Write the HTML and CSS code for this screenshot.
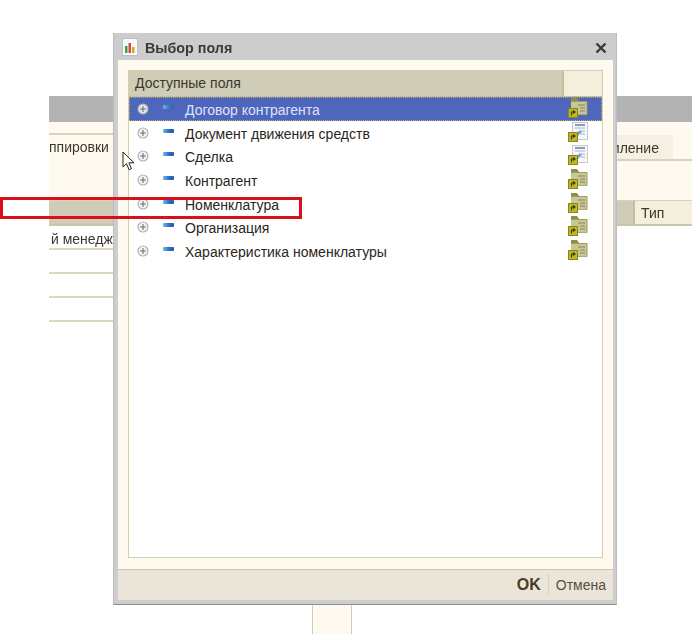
FILE: index.html
```html
<!DOCTYPE html>
<html lang="ru">
<head>
<meta charset="utf-8">
<title>Выбор поля</title>
<link rel="stylesheet" href="styles.css">
</head>
<body>
<svg class="defs" width="0" height="0" aria-hidden="true">
  <defs>
    <symbol id="expand" viewBox="0 0 12 12">
      <circle cx="6" cy="6" r="5" fill="#f4f4f4" stroke="#b4b4b4" stroke-width="1.2"/>
      <path d="M3 6h6M6 3v6" stroke="#707070" stroke-width="1.1"/>
    </symbol>
    <symbol id="badge" viewBox="0 0 10 10">
      <rect x="0.5" y="0.5" width="9" height="9" fill="#bdb922" stroke="#88831c"/>
      <path d="M3.500 7.500V4h3M5 2.500L7 4 5 5.500" fill="none" stroke="#3b3a10" stroke-width="1.100"/>
    </symbol>
    <symbol id="folder" viewBox="0 0 20 20">
      <path d="M3 0h6l2 3h8v14H3z" fill="#8f8d4a"/>
      <rect x="3" y="3.500" width="16" height="13" fill="#c9c795"/>
      <path d="M3 3.500h16v13" fill="none" stroke="#9c9a5e" stroke-width="1"/>
      <path d="M10 7h7M12 10h5M12 13h5" stroke="#87865f" stroke-width="1"/>
      <use href="#badge" x="0" y="10" width="10" height="10"/>
    </symbol>
    <symbol id="doc" viewBox="0 0 20 20">
      <rect x="4.500" y="0.500" width="15" height="17" fill="#f6f7fb" stroke="#c9c9c9"/>
      <path d="M7 3h10" stroke="#5d7fae" stroke-width="1.500"/>
      <path d="M7 6h10M13 9h4M13 12h4" stroke="#a8b4c6" stroke-width="1"/>
      <path d="M8 12l4-4 2 2-4 4z" fill="#6fa6dc"/>
      <use href="#badge" x="0" y="10" width="10" height="10"/>
    </symbol>
  </defs>
</svg>

<main class="backdrop">
  <div class="bg-titlebar"></div>
  <div class="bg-panel">
    <div class="bg-tabs">
      <span class="bg-tab-left">ппировки</span>
      <div class="bg-tabs-rest">
        <span class="bg-tab-right">мление</span>
      </div>
    </div>
    <div class="bg-columns">
      <span class="bg-col-main"></span>
      <span class="bg-col-type">Тип</span>
    </div>
  </div>
  <div class="bg-rows">
    <div class="bg-row bg-row-text"><span>й менедж</span></div>
    <div class="bg-row"></div>
    <div class="bg-row"></div>
    <div class="bg-row"></div>
  </div>
  <div class="bg-stub"></div>
</main>

<section class="dialog">
  <header class="dialog-title">
    <svg class="title-icon" viewBox="0 0 16 18" width="16" height="18">
      <rect x="0.500" y="0.500" width="15" height="17" fill="#fbfbf6" stroke="#b9c0c9"/>
      <rect x="3" y="8" width="2.500" height="7" fill="#3f9c46"/>
      <rect x="6.500" y="5" width="2.500" height="10" fill="#c9503a"/>
      <rect x="10" y="9" width="2.500" height="6" fill="#d4a52a"/>
    </svg>
    <h1>Выбор поля</h1>
    <svg class="close-icon" viewBox="0 0 12 12" width="12" height="12">
      <path d="M1.500 1.500l9 9M10.500 1.500l-9 9" stroke="#3a3a3a" stroke-width="2.400"/>
    </svg>
  </header>
  <div class="dialog-body">
    <div class="tree">
      <div class="tree-head">
        <span class="tree-head-name">Доступные поля</span>
        <span class="tree-head-side"></span>
      </div>
      <ul class="tree-list">
        <li class="tree-row selected">
          <svg class="ico-expand"><use href="#expand"/></svg><i class="dash"></i><span class="label">Договор контрагента</span>
          <svg class="ico-type"><use href="#folder"/></svg>
        </li>
        <li class="tree-row">
          <svg class="ico-expand"><use href="#expand"/></svg><i class="dash"></i><span class="label">Документ движения средств</span>
          <svg class="ico-type"><use href="#doc"/></svg>
        </li>
        <li class="tree-row">
          <svg class="ico-expand"><use href="#expand"/></svg><i class="dash"></i><span class="label">Сделка</span>
          <svg class="ico-type"><use href="#doc"/></svg>
        </li>
        <li class="tree-row">
          <svg class="ico-expand"><use href="#expand"/></svg><i class="dash"></i><span class="label">Контрагент</span>
          <svg class="ico-type"><use href="#folder"/></svg>
        </li>
        <li class="tree-row">
          <svg class="ico-expand"><use href="#expand"/></svg><i class="dash"></i><span class="label">Номенклатура</span>
          <svg class="ico-type"><use href="#folder"/></svg>
        </li>
        <li class="tree-row">
          <svg class="ico-expand"><use href="#expand"/></svg><i class="dash"></i><span class="label">Организация</span>
          <svg class="ico-type"><use href="#folder"/></svg>
        </li>
        <li class="tree-row">
          <svg class="ico-expand"><use href="#expand"/></svg><i class="dash"></i><span class="label">Характеристика номенклатуры</span>
          <svg class="ico-type"><use href="#folder"/></svg>
        </li>
      </ul>
    </div>
  </div>
  <footer class="dialog-foot">
    <span class="btn-ok">OK</span>
    <span class="btn-cancel">Отмена</span>
  </footer>
</section>

<div class="annotation"></div>

<svg class="cursor" viewBox="0 0 14 20" width="14" height="20">
  <path d="M1 1v15l3.500-3.300 2.600 6 2.400-1-2.600-5.900H12z" fill="#fff" stroke="#222" stroke-width="1"/>
</svg>
</body>
</html>
```

FILE: styles.css
```css
* { box-sizing: border-box; }
html, body { margin: 0; padding: 0; }
body {
  width: 692px;
  height: 634px;
  overflow: hidden;
  background: #fff;
  position: relative;
  font-family: "Liberation Sans", Arial, sans-serif;
  font-size: 14px;
  color: #2e2a20;
  filter: blur(0.35px);
}
.defs { position: absolute; }

/* background window */
.backdrop { padding: 96px 0 0 49px; display: flex; flex-direction: column; }
.bg-titlebar { height: 26px; background: #b3b3b3; }
.bg-panel { height: 104px; background: #fffaef; display: flex; flex-direction: column; }
.bg-tabs {
  height: 39px;
  padding-top: 11px;
  display: flex;
  align-items: stretch;
}
.bg-tab-left {
  width: 120px;
  flex: none;
  border-top: 2px solid #d8d3b8;
  padding-top: 4px;
  line-height: 16px;
  color: #3b372c;
}
.bg-tabs-rest {
  flex: 1;
  display: flex;
  justify-content: flex-end;
  border-bottom: 2px solid #d8d3b8;
  padding-top: 2px;
}
.bg-tab-right {
  width: 124px;
  margin-right: 19px;
  background: #f5f0e4;
  padding: 5px 0 0 61px;
  line-height: 16px;
  color: #3b372c;
}
.bg-columns {
  height: 26px;
  margin-top: 39px;
  display: flex;
  border-top: 1px solid #d8d3b8;
  border-bottom: 2px solid #c9c5a6;
}
.bg-col-main { width: 586px; background: #cfccb8; border-right: 2px solid #c2be9f; }
.bg-col-type { flex: 1; background: #f3efdc; padding: 4px 0 0 6px; line-height: 17px; color: #3b372c; }
.bg-rows { display: flex; flex-direction: column; height: 96px; width: 70px; white-space: nowrap; }
.bg-row { height: 24px; flex: none; border-bottom: 2px solid #dcd7bd; padding-top: 5px; line-height: 16px; color: #3b372c; }
.bg-row-text { padding-left: 2px; }
.bg-stub {
  width: 40px;
  height: 30px;
  margin: 283px 0 0 263px;
  background: #fffaef;
  border-left: 1px solid #d2ceb4;
  border-right: 1px solid #d2ceb4;
}

/* red annotation */
.annotation {
  position: absolute;
  left: 0; top: 197px;
  width: 302px; height: 22px;
  border: 3px solid #d9101a;
}

/* dialog */
.dialog {
  position: absolute;
  left: 113px; top: 33px;
  width: 504px; height: 572px;
  background: #cdcdcd;
  border-bottom: 1px solid #8c8c8c;
  border-left: 1px solid #bdbdbd;
  border-right: 1px solid #bdbdbd;
  padding: 0 3px 4px 4px;
  display: flex;
  flex-direction: column;
}
.dialog-title {
  height: 27px;
  display: flex;
  align-items: center;
  margin: 0 -3px 0 -4px;
  padding: 0 9px 0 8px;
  flex: none;
}
.title-icon { flex: none; }
.dialog-title h1 { margin: 2px 0 0 7px; font-size: 14.300px; font-weight: 700; color: #3a3a36; flex: 1; }
.close-icon { flex: none; margin-top: 2px; }
.dialog-body { flex: 1; background: #fffaef; padding: 10px 10px 11px 10px; display: flex; border-bottom: 1px solid #cbc8a4; }
.tree { flex: 1; background: #fff; border: 1px solid #d2cfae; display: flex; flex-direction: column; }
.tree-head { height: 26px; display: flex; flex: none; background: #cfccb8; border-bottom: 1px solid #c4c09f; }
.tree-head-name { flex: 1; padding: 4px 0 0 6px; line-height: 16px; color: #3a372a; }
.tree-head-side { width: 40px; background: #f3efdc; border-left: 2px solid #c4c09f; }
.tree-list { list-style: none; margin: 0; padding: 0; }
.tree-row {
  height: 23.700px;
  display: flex;
  align-items: center;
  padding-left: 8px;
  color: #2a2620;
}
.tree-row.selected { background: #4f66bd; color: #dfe3f6; outline: 1px dotted #b5ab6a; outline-offset: -1px; }
.ico-expand { width: 12px; height: 12px; flex: none; }
.selected .ico-expand { opacity: 0.9; }
.dash {
  width: 11px; height: 4px; flex: none;
  margin-left: 14px;
  background: linear-gradient(90deg, #7fb2e2, #2c78c8 50%, #1a58a6);
  border-radius: 1px;
  position: relative; top: -2px;
}
.selected .dash { background: linear-gradient(90deg, #7fb2e2, #3b7cc8 50%, #2f5fa8); }
.label { margin: 2px 0 0 11px; flex: 1; line-height: 16px; }
.ico-type { width: 20px; height: 20px; flex: none; margin-right: 14px; position: relative; top: -1px; }

.dialog-foot {
  height: 30px;
  flex: none;
  background: #ebe4d8;
  display: flex;
  justify-content: flex-end;
  align-items: center;
  padding-right: 7px;
}
.btn-ok { font-weight: 700; font-size: 16px; color: #4a3d22; padding-right: 7px; border-right: 1px solid #d9d3c0; line-height: 22px; }
.btn-cancel { padding-left: 7px; color: #54503f; line-height: 22px; }

.cursor { position: absolute; left: 122px; top: 151px; }
```
